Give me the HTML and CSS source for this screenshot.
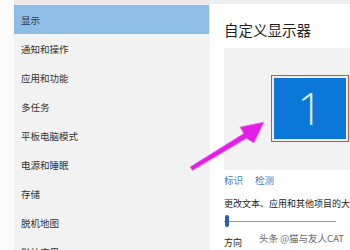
FILE: index.html
```html
<!DOCTYPE html>
<html lang="zh-CN">
<head>
<meta charset="utf-8">
<link rel="stylesheet" href="styles.css">
</head>
<body>
<div class="page">
  <div class="gutter"></div>
  <nav class="sidebar">
    <div class="item selected">显示</div>
    <div class="item">通知和操作</div>
    <div class="item">应用和功能</div>
    <div class="item">多任务</div>
    <div class="item">平板电脑模式</div>
    <div class="item">电源和睡眠</div>
    <div class="item">存储</div>
    <div class="item">脱机地图</div>
    <div class="item">默认应用</div>
  </nav>
  <main class="main">
    <h1 class="title">自定义显示器</h1>
    <div class="stage">
      <div class="monitor"><span class="num">1</span></div>
    </div>
    <div class="links"><span class="link">标识</span><span class="link">检测</span></div>
    <div class="label">更改文本、应用和其他项目的大小</div>
    <div class="slider"><span class="thumb"></span><span class="track"></span></div>
    <div class="label dir">方向</div>
  </main>
  <svg class="arrow" width="350" height="250" viewBox="0 0 350 250">
    <polygon points="190,167 243.6,133.6 240,127 264,122 254,143 246.4,138.4 192.5,170.5" fill="#e21ee6" stroke="#f07cf4" stroke-width="0.8" stroke-linejoin="round"/>
  </svg>
  <div class="watermark">头条 @猫与友人CAT</div>
</div>
</body>
</html>
```
FILE: styles.css
```css
* { box-sizing: border-box; margin: 0; padding: 0; }
html, body { width: 350px; height: 250px; overflow: hidden; background: #fff; }
body { font-family: "Noto Sans CJK SC", "Noto Sans", sans-serif; color: #222; }
.page { position: relative; display: flex; width: 350px; height: 250px; overflow: hidden; }
.gutter { width: 14px; flex: none; background: #fbfbfb; }
.sidebar { width: 195px; flex: none; background: #f2f2f2; border-top: 5px solid #e8ebee; display: flex; flex-direction: column; }
.item { height: 29px; flex: none; display: flex; align-items: center; padding-left: 7px; font-size: 9.5px; color: #333; }
.item.selected { background: #8ebde6; color: #1f3550; }
.main { flex: 1; min-width: 0; background: #fff; border-top: 4px solid #eeeff1; border-left: 1px solid #f0f0f0; padding-left: 14px; display: flex; flex-direction: column; }
.title { font-size: 14.5px; font-weight: 400; line-height: 20px; margin-top: 16px; color: #1e1e1e; white-space: nowrap; }
.stage { margin-top: 8px; height: 122px; width: 140px; background: #f2f2f2; padding: 27px 0 0 47px; flex: none; }
.monitor { width: 78px; height: 67px; border: 1px solid #c9524f; padding: 2px; background: #fbe9e9; }
.num { display: flex; justify-content: center; align-items: center; height: 100%; background: #0b77d6; color: #d6eeff; font-family: "Open Sans", "Noto Sans", sans-serif; font-weight: 300; font-size: 44px; line-height: 1; padding-bottom: 2px; }
.links { display: flex; gap: 12px; margin-top: 3px; height: 13px; align-items: center; font-size: 9.5px; }
.link { color: #3b7fbf; }
.label { font-size: 9px; color: #222; white-space: nowrap; margin-top: 12px; height: 12px; line-height: 12px; }
.slider { position: relative; display: flex; align-items: center; height: 14px; margin-top: 4px; }
.track { height: 1px; width: 112px; background: #9a9a9a; }
.thumb { position: absolute; left: 1px; top: 1px; width: 4px; height: 12px; border-radius: 2px; background: #2465a8; }
.dir { margin-top: 9px; }
.arrow { position: absolute; left: 0; top: 0; pointer-events: none; }
.watermark { position: absolute; left: 259px; top: 231px; font-size: 9.5px; color: #6a6a6a; white-space: nowrap; text-shadow: 0 0 2px #fff, 0 0 2px #fff; }
```
